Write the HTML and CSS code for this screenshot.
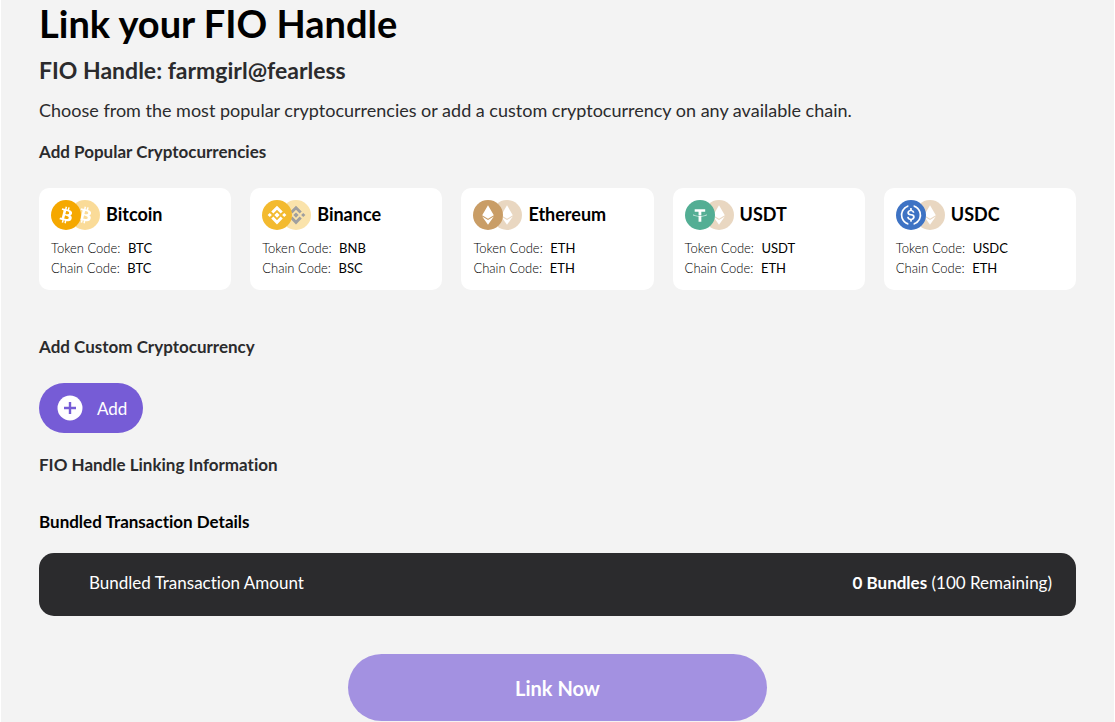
FILE: index.html
```
<!DOCTYPE html>
<html lang="en">
<head>
    <meta charset="UTF-8">
    <meta name="viewport" content="width=device-width, initial-scale=1.0">
    <title>Link your FIO Handle</title>
    <link rel="stylesheet" href="styles.css">
</head>
<body>
    <!-- coin glyphs, shared by the cards -->
    <svg class="sprite" aria-hidden="true">
        <symbol id="btc" viewBox="0 0 32 32">
            <path transform="translate(1.6 1.6) scale(.9)" d="M23.189 14.02c.314-2.096-1.283-3.223-3.465-3.975l.708-2.84-1.728-.43-.69 2.765c-.454-.114-.92-.22-1.385-.326l.695-2.783L15.596 6l-.708 2.839c-.376-.086-.746-.17-1.104-.26l.002-.009-2.384-.595-.46 1.846s1.283.294 1.256.312c.7.175.826.638.805 1.006l-.806 3.235c.048.012.11.03.18.057l-.183-.045-1.13 4.532c-.086.212-.303.531-.793.41.018.025-1.256-.313-1.256-.313l-.858 1.978 2.25.561c.418.105.828.215 1.231.318l-.715 2.872 1.727.43.708-2.84c.472.127.93.245 1.378.357l-.706 2.828 1.728.43.715-2.866c2.948.558 5.164.333 6.097-2.333.752-2.146-.037-3.385-1.588-4.192 1.13-.26 1.98-1.003 2.207-2.538zm-3.95 5.538c-.533 2.147-4.148.986-5.32.695l.95-3.805c1.172.293 4.929.872 4.37 3.11zm.535-5.569c-.487 1.953-3.495.96-4.47.717l.86-3.45c.975.243 4.118.696 3.61 2.733z"/>
        </symbol>
        <symbol id="bnb" viewBox="0 0 32 32">
            <path d="M12.116 14.404L16 10.52l3.886 3.886 2.26-2.26L16 6l-6.144 6.144 2.26 2.26zM6 16l2.26-2.26L10.52 16l-2.26 2.26L6 16zm6.116 1.596L16 21.48l3.886-3.886 2.26 2.259L16 26l-6.144-6.144-.003-.003 2.263-2.257zM21.48 16l2.26-2.26L26 16l-2.26 2.26L21.48 16zM16 13.2l2.8 2.8-2.8 2.8-2.8-2.8z"/>
        </symbol>
        <symbol id="eth" viewBox="0 0 32 32">
            <path d="M16 5.5l6.2 10.7L16 20l-6.2-3.8zM9.8 17.6l6.2 3.8 6.2-3.8L16 26.5z"/>
        </symbol>
        <symbol id="usdt" viewBox="0 0 32 32">
            <path transform="translate(3.8 3.8) scale(.76)" d="M17.922 17.383v-.002c-.11.008-.677.042-1.942.042-1.01 0-1.721-.03-1.971-.042v.003c-3.888-.171-6.79-.848-6.79-1.658 0-.809 2.902-1.486 6.79-1.66v2.644c.254.018.982.061 1.988.061 1.207 0 1.812-.05 1.925-.06v-2.643c3.88.173 6.775.85 6.775 1.658 0 .81-2.895 1.485-6.775 1.657m0-3.59v-2.366h5.414V7.819H8.595v3.608h5.414v2.365c-4.4.202-7.709 1.074-7.709 2.118 0 1.044 3.309 1.915 7.709 2.118v7.582h3.913v-7.584c4.393-.202 7.694-1.073 7.694-2.116 0-1.043-3.301-1.914-7.694-2.117"/>
        </symbol>
        <symbol id="usdc" viewBox="0 0 32 32">
            <path d="M20.022 18.124c0-2.124-1.28-2.852-3.84-3.156-1.828-.243-2.193-.728-2.193-1.578 0-.85.61-1.396 1.828-1.396 1.097 0 1.707.364 2.011 1.275a.458.458 0 00.427.303h.975a.416.416 0 00.427-.425v-.06a3.04 3.04 0 00-2.743-2.489V9.142c0-.243-.183-.425-.487-.486h-.915c-.243 0-.426.182-.487.486v1.396c-1.829.242-2.986 1.456-2.986 2.974 0 2.002 1.218 2.791 3.778 3.095 1.707.303 2.255.668 2.255 1.639 0 .97-.853 1.638-2.011 1.638-1.585 0-2.133-.667-2.316-1.578-.06-.242-.244-.364-.427-.364h-1.036a.416.416 0 00-.426.425v.06c.243 1.518 1.219 2.61 3.23 2.914v1.457c0 .242.183.425.487.485h.915c.243 0 .426-.182.487-.485V21.34c1.829-.303 3.047-1.578 3.047-3.217z"/>
            <path d="M12.892 24.497c-4.754-1.7-7.192-6.98-5.424-11.653.914-2.55 2.925-4.491 5.424-5.402.244-.121.365-.303.365-.607v-.85c0-.242-.121-.424-.365-.485-.061 0-.183 0-.244.06a10.895 10.895 0 00-7.13 13.717c1.096 3.4 3.717 6.01 7.13 7.102.244.121.488 0 .548-.243.061-.06.061-.122.061-.243v-.85c0-.182-.182-.424-.365-.546zm6.46-18.936c-.244-.122-.488 0-.548.242-.061.061-.061.122-.061.243v.85c0 .243.182.485.365.607 4.754 1.7 7.192 6.98 5.424 11.653-.914 2.55-2.925 4.491-5.424 5.402-.244.121-.365.303-.365.607v.85c0 .242.121.424.365.485.061 0 .183 0 .244-.06a10.895 10.895 0 007.13-13.717c-1.096-3.46-3.778-6.07-7.13-7.162z"/>
        </symbol>
    </svg>

    <main class="page">
        <h1 class="title">Link your FIO Handle</h1>
        <h2 class="handle">FIO Handle: farmgirl@fearless</h2>
        <p class="intro">Choose from the most popular cryptocurrencies or add a custom cryptocurrency on any available chain.</p>

        <h3 class="subtitle">Add Popular Cryptocurrencies</h3>
        <div class="cards">
            <button type="button" class="card">
                <span class="card-head">
                    <svg class="coin btc"><use href="#btc"/></svg>
                    <svg class="coin chain btc"><use href="#btc"/></svg>
                    <span class="name">Bitcoin</span>
                </span>
                <span class="code">Token Code: <b>BTC</b></span>
                <span class="code">Chain Code: <b>BTC</b></span>
            </button>
            <button type="button" class="card">
                <span class="card-head">
                    <svg class="coin bnb"><use href="#bnb"/></svg>
                    <svg class="coin chain bsc"><use href="#bnb"/></svg>
                    <span class="name">Binance</span>
                </span>
                <span class="code">Token Code: <b>BNB</b></span>
                <span class="code">Chain Code: <b>BSC</b></span>
            </button>
            <button type="button" class="card">
                <span class="card-head">
                    <svg class="coin eth"><use href="#eth"/></svg>
                    <svg class="coin chain eth"><use href="#eth"/></svg>
                    <span class="name">Ethereum</span>
                </span>
                <span class="code">Token Code: <b>ETH</b></span>
                <span class="code">Chain Code: <b>ETH</b></span>
            </button>
            <button type="button" class="card">
                <span class="card-head">
                    <svg class="coin usdt"><use href="#usdt"/></svg>
                    <svg class="coin chain eth"><use href="#eth"/></svg>
                    <span class="name">USDT</span>
                </span>
                <span class="code">Token Code: <b>USDT</b></span>
                <span class="code">Chain Code: <b>ETH</b></span>
            </button>
            <button type="button" class="card">
                <span class="card-head">
                    <svg class="coin usdc"><use href="#usdc"/></svg>
                    <svg class="coin chain eth"><use href="#eth"/></svg>
                    <span class="name">USDC</span>
                </span>
                <span class="code">Token Code: <b>USDC</b></span>
                <span class="code">Chain Code: <b>ETH</b></span>
            </button>
        </div>

        <h3 class="subtitle">Add Custom Cryptocurrency</h3>
        <button type="button" class="add">
            <svg class="plus" viewBox="0 0 26 26" aria-hidden="true">
                <circle cx="13" cy="13" r="12.5"/>
                <path d="M13 7v12M7 13h12"/>
            </svg>
            Add
        </button>

        <h3 class="subtitle">FIO Handle Linking Information</h3>
        <h3 class="subtitle dark">Bundled Transaction Details</h3>
        <div class="bundle">
            <span>Bundled Transaction Amount</span>
            <span><b>0 Bundles</b> (100 Remaining)</span>
        </div>

        <button type="button" class="link-now">Link Now</button>
    </main>
</body>
</html>
```
FILE: styles.css
```
* {
    box-sizing: border-box;
}
body {
    margin: 0;
    font-family: Lato, "Open Sans", sans-serif;
    font-variant-ligatures: none;
    background-color: #fff;
    color: #2b2b2d;
}
button {
    font-family: inherit;
    border: none;
    cursor: pointer;
}
.sprite {
    display: none;
}
.page {
    display: flex;
    flex-direction: column;
    margin: 0 1px;
    padding: 0 38px;
    background-color: #f3f3f3;
}
.title {
    margin: 0;
    font-size: 38px;
    line-height: 46px;
    color: #000;
}
.handle {
    margin: 10px 0 0;
    font-size: 23px;
    line-height: 28px;
}
.intro {
    margin: 14px 0 0;
    font-size: 18px;
    line-height: 24px;
}
.subtitle {
    margin: 18px 0 0;
    font-size: 17px;
    line-height: 24px;
}
.dark {
    margin-top: 33px;
    color: #000;
}
.cards {
    display: grid;
    grid-template-columns: repeat(5, 1fr);
    gap: 19px;
    margin: 24px 0 27px;
}
.card {
    display: flex;
    flex-direction: column;
    padding: 12px;
    border-radius: 10px;
    background-color: #fff;
    text-align: left;
    color: #000;
}
.card-head {
    display: flex;
    align-items: center;
    margin-bottom: 8px;
}
.coin {
    z-index: 1;
    flex: none;
    width: 30px;
    height: 30px;
    border-radius: 50%;
    fill: #fff;
}
.chain {
    z-index: 0;
    margin-left: -11px;
    opacity: 0.4;
}
.btc {
    background-color: #f5a800;
}
.bnb {
    background-color: #f3ba2f;
}
.bsc {
    background-color: #f3ba2f;
    fill: #111;
}
.eth {
    background-color: #c99d66;
}
.usdt {
    background-color: #53ae94;
}
.usdc {
    background-color: #3e73c4;
}
.name {
    margin-left: 6px;
    padding-bottom: 3px;
    font-size: 18px;
    line-height: 24px;
    font-weight: 700;
}
.code {
    font-size: 13px;
    line-height: 20px;
    font-weight: 300;
}
.code b {
    margin-left: 4px;
    font-weight: 400;
    color: #000;
}
.add {
    display: flex;
    align-items: center;
    align-self: flex-start;
    gap: 14px;
    height: 50px;
    margin: 24px 0 2px;
    padding: 0 16px 0 18px;
    border-radius: 25px;
    background-color: #765cd6;
    font-size: 17px;
    color: #fff;
}
.plus {
    width: 26px;
    height: 26px;
    fill: #fff;
    stroke: #765cd6;
    stroke-width: 2.4;
}
.plus circle {
    stroke: none;
}
.bundle {
    display: flex;
    justify-content: space-between;
    margin-top: 19px;
    padding: 18px 24px 21px 50px;
    border-radius: 15px;
    background-color: #2b2b2d;
    font-size: 17px;
    line-height: 24px;
    color: #fff;
}
.link-now {
    align-self: center;
    width: 419px;
    max-width: 100%;
    height: 67px;
    margin: 38px 0 1px;
    border-radius: 34px;
    background-color: #a391e1;
    font-size: 20px;
    font-weight: 700;
    color: #fff;
}
```
